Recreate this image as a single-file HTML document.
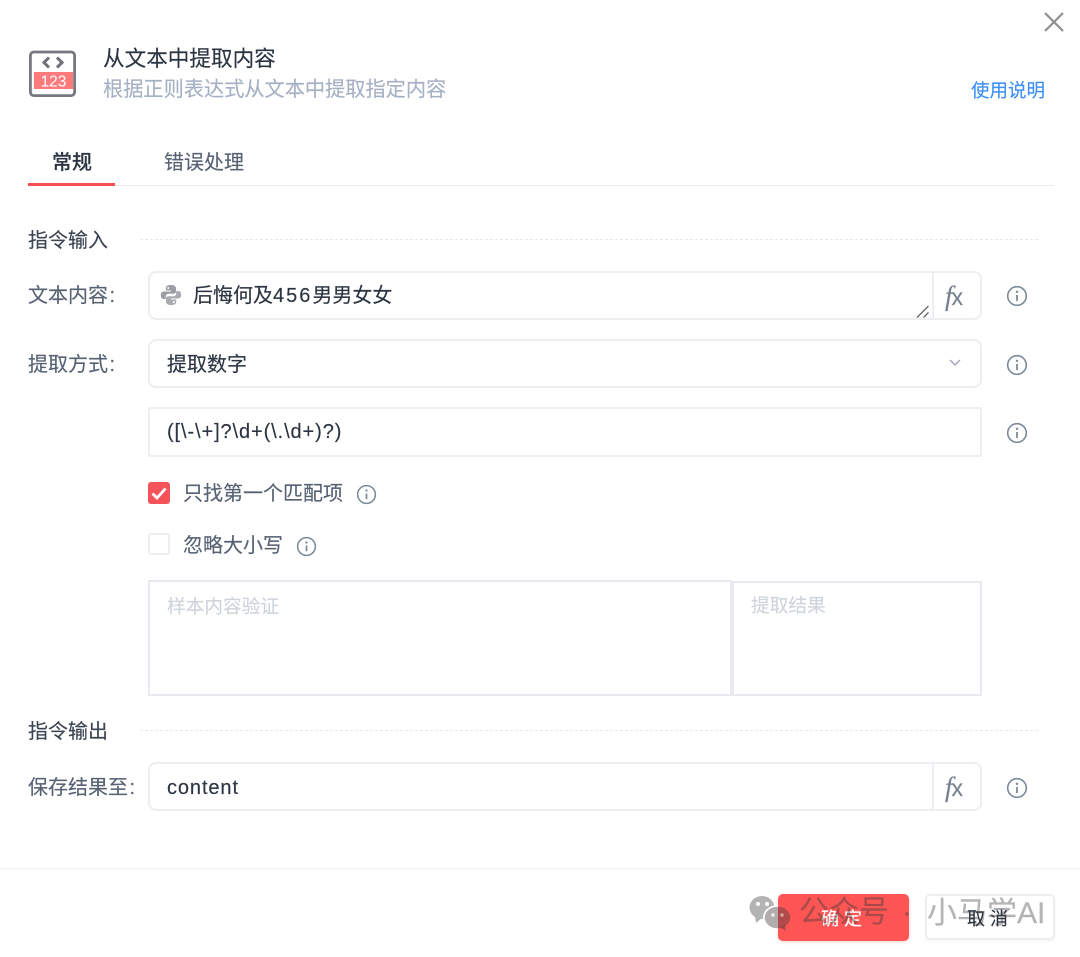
<!DOCTYPE html>
<html lang="zh-CN">
<head>
<meta charset="utf-8">
<title>从文本中提取内容</title>
<style>
html,body{margin:0;padding:0;background:#fff}
#p{position:relative;width:1080px;height:957px;overflow:hidden;background:#fff;font-family:"Liberation Sans","Noto Sans CJK SC",sans-serif}
.t{position:absolute;white-space:nowrap;line-height:1;font-size:20px;color:#2b3442;-webkit-text-stroke:.15px currentColor}
.l{color:#566273}
.b{position:absolute;box-sizing:border-box;border:2px solid #eceef2;background:#fff}
.d{position:absolute;height:0;border-top:1px dashed #e8eaee;left:140px;width:898px}
svg{position:absolute;display:block}
.v{position:absolute;width:2px;background:#eceef2}
.fx{color:#768190;font-size:23px}
.fx i{font-family:"Liberation Serif",serif;font-size:27px;margin-right:-1px}
.c{margin-left:1.500px}
</style>
</head>
<body>
<div id="p">
<!-- close -->
<svg style="left:1043px;top:11px" width="22" height="22" viewBox="0 0 22 22"><path d="M2 2L20 20M20 2L2 20" stroke="#8f8f8f" stroke-width="2.200" fill="none"/></svg>

<!-- app icon -->
<svg style="left:28px;top:49px" width="50" height="50" viewBox="0 0 50 50">
<rect x="2.400" y="3" width="44.200" height="43.600" rx="3.500" fill="#fff" stroke="#77777f" stroke-width="2.800"/>
<rect x="6" y="23" width="39" height="17" fill="#ff7b7b"/>
<path d="M21 8.500L16 13.500L21 18.500M29 8.500L34 13.500L29 18.500" fill="none" stroke="#6e6e76" stroke-width="3"/>
<text x="25.500" y="37.500" text-anchor="middle" font-size="15.500" fill="#fff" font-family="Liberation Sans,sans-serif">123</text>
</svg>

<div class="t" style="left:103px;top:48px;font-size:21.600px;color:#2b3442">从文本中提取内容</div>
<div class="t" style="left:103px;top:80px;font-size:20.200px;color:#a6b1c4">根据正则表达式从文本中提取指定内容</div>
<div class="t" style="left:971px;top:82px;font-size:18.500px;color:#3d8ef5">使用说明</div>

<!-- tabs -->
<div class="t" style="left:52px;top:153px;font-weight:500;color:#2b3442">常规</div>
<div class="t l" style="left:164px;top:153px">错误处理</div>
<div style="position:absolute;left:28px;top:185px;width:1026px;height:1px;background:#ececef"></div>
<div style="position:absolute;left:28px;top:183px;width:87px;height:3px;background:#f55050"></div>

<!-- section 1 -->
<div class="t" style="left:28px;top:231px;color:#3b4452">指令输入</div>
<div class="d" style="top:239px"></div>

<!-- text content -->
<div class="t l" style="left:28px;top:286px">文本内容<span class="c">:</span></div>
<div class="b" style="left:148px;top:271px;width:834px;height:49px;border-radius:8px"></div>
<div class="v" style="left:932px;top:272px;height:47px"></div>
<svg style="left:160px;top:284px" width="22" height="22" viewBox="0 0 22 22">
<path d="M10.800 1C7 1 5.800 2.500 5.800 4.300V6.500H11V7.500H3.800C1.800 7.500 .8 9 .8 11.200C.8 13.500 2 15 3.800 15H5.800V12.500C5.800 10.800 7 9.700 8.700 9.700H13.500C15 9.700 16 8.600 16 7.200V4.300C16 2.300 14.300 1 10.800 1ZM8.200 3A1 1 0 1 1 8.200 5A1 1 0 0 1 8.200 3Z" fill="#9a9da3"/>
<path d="M11.200 21C15 21 16.200 19.500 16.200 17.700V15.500H11V14.500H18.200C20.200 14.500 21.200 13 21.200 10.800C21.200 8.500 20 7 18.200 7H16.200V9.500C16.200 11.200 15 12.300 13.300 12.300H8.500C7 12.300 6 13.400 6 14.800V17.700C6 19.700 7.700 21 11.200 21ZM13.800 19A1 1 0 1 1 13.800 17A1 1 0 0 1 13.800 19Z" fill="#a8abb0"/>
</svg>
<div class="t" style="left:193px;top:286px">后悔何及<span style="letter-spacing:2px">456</span>男男女女</div>
<svg style="left:916px;top:305px" width="14" height="14" viewBox="0 0 14 14"><path d="M1 12.500L12.500 1M7.500 12.500L12.500 7.500" stroke="#666" stroke-width="1.300" fill="none"/></svg>
<div class="t fx" style="left:945px;top:283px"><i>f</i>x</div>
<svg style="left:1006px;top:285px" width="22" height="22" viewBox="0 0 22 22"><circle cx="11" cy="11" r="9.300" fill="none" stroke="#7b8a99" stroke-width="1.600"/><circle cx="11" cy="6.800" r="1.200" fill="#7b8a99"/><path d="M11 10V16" stroke="#7b8a99" stroke-width="1.800"/></svg>

<!-- method -->
<div class="t l" style="left:28px;top:355px">提取方式<span class="c">:</span></div>
<div class="b" style="left:148px;top:339px;width:834px;height:49px;border-radius:8px"></div>
<div class="t" style="left:167px;top:355px">提取数字</div>
<svg style="left:948px;top:358px" width="14" height="10" viewBox="0 0 14 10"><path d="M2 2L7 7L12 2" fill="none" stroke="#9aa5b5" stroke-width="1.400"/></svg>
<svg style="left:1006px;top:354px" width="22" height="22" viewBox="0 0 22 22"><circle cx="11" cy="11" r="9.300" fill="none" stroke="#7b8a99" stroke-width="1.600"/><circle cx="11" cy="6.800" r="1.200" fill="#7b8a99"/><path d="M11 10V16" stroke="#7b8a99" stroke-width="1.800"/></svg>

<!-- regex -->
<div class="b" style="left:148px;top:407px;width:834px;height:50px;border-radius:2px"></div>
<div class="t" style="left:167px;top:422px;letter-spacing:.9px">([\-\+]?\d+(\.\d+)?)</div>
<svg style="left:1006px;top:422px" width="22" height="22" viewBox="0 0 22 22"><circle cx="11" cy="11" r="9.300" fill="none" stroke="#7b8a99" stroke-width="1.600"/><circle cx="11" cy="6.800" r="1.200" fill="#7b8a99"/><path d="M11 10V16" stroke="#7b8a99" stroke-width="1.800"/></svg>

<!-- checkboxes -->
<div style="position:absolute;left:148px;top:482px;width:22px;height:22px;border-radius:3px;background:#f5535a"></div>
<svg style="left:148px;top:482px" width="22" height="22" viewBox="0 0 22 22"><path d="M4.500 11.500L9 16L17.500 6.500" fill="none" stroke="#fff" stroke-width="2.800"/></svg>
<div class="t l" style="left:183px;top:484px">只找第一个匹配项</div>
<svg style="left:356px;top:484px" width="21" height="21" viewBox="0 0 22 22"><circle cx="11" cy="11" r="9.300" fill="none" stroke="#7b8a99" stroke-width="1.600"/><circle cx="11" cy="6.800" r="1.200" fill="#7b8a99"/><path d="M11 10V16" stroke="#7b8a99" stroke-width="1.800"/></svg>
<div class="b" style="left:148px;top:533px;width:22px;height:22px;border-radius:3px"></div>
<div class="t l" style="left:183px;top:536px">忽略大小写</div>
<svg style="left:296px;top:536px" width="21" height="21" viewBox="0 0 22 22"><circle cx="11" cy="11" r="9.300" fill="none" stroke="#7b8a99" stroke-width="1.600"/><circle cx="11" cy="6.800" r="1.200" fill="#7b8a99"/><path d="M11 10V16" stroke="#7b8a99" stroke-width="1.800"/></svg>

<!-- textareas -->
<div class="b" style="left:148px;top:580px;width:584px;height:116px;border-color:#e9eaef"></div>
<div class="b" style="left:732px;top:581px;width:250px;height:115px;border-color:#e9eaef"></div>
<div class="t" style="left:167px;top:598px;font-size:18.700px;color:#cfd4dc">样本内容验证</div>
<div class="t" style="left:751px;top:597px;font-size:18.700px;color:#cfd4dc">提取结果</div>

<!-- section 2 -->
<div class="t" style="left:28px;top:722px;color:#3b4452">指令输出</div>
<div class="d" style="top:730px"></div>

<!-- output -->
<div class="t l" style="left:28px;top:778px">保存结果至<span class="c">:</span></div>
<div class="b" style="left:148px;top:762px;width:834px;height:49px;border-radius:8px"></div>
<div class="v" style="left:932px;top:763px;height:47px"></div>
<div class="t" style="left:167px;top:778px;letter-spacing:.9px">content</div>
<div class="t fx" style="left:945px;top:774px"><i>f</i>x</div>
<svg style="left:1006px;top:777px" width="22" height="22" viewBox="0 0 22 22"><circle cx="11" cy="11" r="9.300" fill="none" stroke="#7b8a99" stroke-width="1.600"/><circle cx="11" cy="6.800" r="1.200" fill="#7b8a99"/><path d="M11 10V16" stroke="#7b8a99" stroke-width="1.800"/></svg>

<!-- footer -->
<div style="position:absolute;left:0;top:868px;width:1080px;height:1px;background:#eeeff2"></div>
<div style="position:absolute;left:778px;top:894px;width:131px;height:47px;border-radius:5px;background:#ff5555;box-shadow:0 1px 3px rgba(240,80,80,.25)"></div>
<div class="t" style="left:821px;top:910px;font-size:18px;color:#fff;letter-spacing:5px">确定</div>
<div class="b" style="left:925px;top:894px;width:130px;height:46px;border-radius:5px;box-shadow:0 1px 3px rgba(0,0,0,.05)"></div>
<div class="t" style="left:967px;top:910px;font-size:18px;color:#2b3442;letter-spacing:5px">取消</div>

<!-- watermark -->
<svg style="left:749px;top:895px" width="44" height="38" viewBox="0 0 44 38">
<defs><clipPath id="cl"><rect x="0" y="0" width="29" height="38"/></clipPath></defs>
<ellipse cx="13" cy="12.500" rx="12.500" ry="11.500" fill="#b4b4b4"/>
<path d="M6 21L7 28L13 23Z" fill="#b4b4b4"/>
<ellipse cx="28.500" cy="22.500" rx="14.500" ry="12.500" fill="#fff" clip-path="url(#cl)"/>
<ellipse cx="28.500" cy="22.500" rx="12.800" ry="10.800" fill="rgba(70,60,60,.42)"/>
<path d="M31 32.500L37 36L36 30Z" fill="rgba(70,60,60,.42)"/>
<circle cx="9" cy="9" r="2" fill="#fff"/><circle cx="18" cy="9" r="2" fill="#fff"/>
<circle cx="24" cy="20" r="1.700" fill="rgba(255,255,255,.85)"/><circle cx="33" cy="20" r="1.700" fill="rgba(255,255,255,.5)"/>
</svg>
<div class="t" style="left:799px;top:898px;font-size:30px;color:rgba(60,60,60,.42)">公众号</div>
<div class="t" style="left:902px;top:898px;font-size:30px;color:rgba(60,60,60,.42)">·</div>
<div class="t" style="left:927px;top:899px;font-size:30px;color:rgba(60,60,60,.38)">小马学AI</div>
</div>
</body>
</html>
